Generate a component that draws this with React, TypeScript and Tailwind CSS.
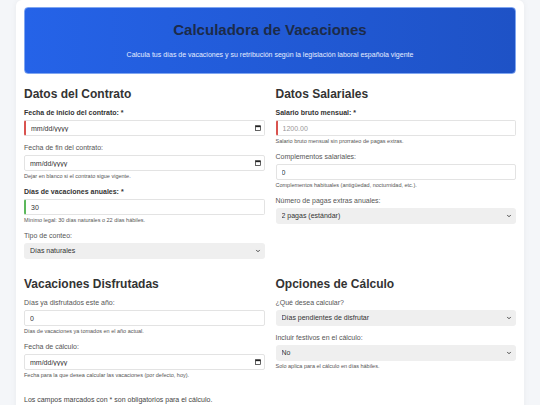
import { ChevronDown } from "lucide-react";

interface FieldProps {
  label: string;
  required?: boolean;
  help?: string;
  children: React.ReactNode;
}

function Field({ label, required, help, children }: FieldProps) {
  return (
    <div className="mb-[7px]">
      <label
        className={`block text-[7px] leading-[9px] mb-[3px] ${
          required ? "font-bold text-[#333]" : "text-[#555]"
        }`}
      >
        {label}
        {required && " *"}
      </label>
      {children}
      {help && <p className="mt-[2px] text-[5.5px] leading-[7px] text-[#555]">{help}</p>}
    </div>
  );
}

function inputClass(status?: "error" | "ok", darkPlaceholder?: boolean) {
  return `block w-full h-[16px] px-[5px] text-[7px] text-[#333] bg-white border border-[#e3e3e3] rounded-[2px] outline-none ${
    darkPlaceholder ? "placeholder:text-[#333]" : "placeholder:text-[#999]"
  } ${
    status === "error"
      ? "border-l-2 border-l-[#d9534f]"
      : status === "ok"
      ? "border-l-2 border-l-[#5cb85c]"
      : ""
  }`;
}

function TextInput({
  value,
  placeholder,
  status,
}: {
  value?: string;
  placeholder?: string;
  status?: "error" | "ok";
}) {
  return <input type="text" defaultValue={value} placeholder={placeholder} className={inputClass(status)} />;
}

function DateInput({ status }: { status?: "error" | "ok" }) {
  return (
    <div className="relative">
      <input type="text" placeholder="mm/dd/yyyy" className={inputClass(status, true)} />
      {/* calendar picker glyph */}
      <svg
        viewBox="0 0 12 12"
        className="absolute right-[4px] top-1/2 -translate-y-1/2 w-[6px] h-[6px] pointer-events-none"
      >
        <rect x="1" y="1.5" width="10" height="9.5" fill="none" stroke="#222" strokeWidth="1.4" />
        <rect x="1" y="1.5" width="10" height="2.8" fill="#222" />
      </svg>
    </div>
  );
}

function Select({ options }: { options: string[] }) {
  return (
    <div className="relative">
      <select className="block w-full h-[16px] pl-[6px] pr-4 text-[7px] text-[#333] bg-[#efefef] rounded-[3px] appearance-none outline-none">
        {options.map((o) => (
          <option key={o}>{o}</option>
        ))}
      </select>
      <ChevronDown
        className="absolute right-[4px] top-1/2 -translate-y-1/2 w-[6px] h-[6px] text-[#333] pointer-events-none"
        strokeWidth={3.5}
      />
    </div>
  );
}

function Section({ title, children }: { title: string; children: React.ReactNode }) {
  return (
    <section>
      <h2 className="text-[12px] leading-[16px] font-bold text-[#333] mb-[6px]">{title}</h2>
      {children}
    </section>
  );
}

export default function App() {
  return (
    <div className="min-h-screen bg-[#f4f6f9] font-['Liberation_Sans',Arial,sans-serif]">
      <div className="mx-4 bg-white rounded-md shadow-[0_0_6px_rgba(0,0,0,0.05)] px-2 pt-[7px] pb-4">
        {/* Header */}
        <header className="h-[67px] rounded-[4px] border border-[#80a6f0] bg-linear-to-r from-[#2563e8] to-[#1e52c6] flex flex-col items-center pt-[12px]">
          <h1 className="text-[15px] leading-[19px] font-bold text-[#1c2b4a]">Calculadora de Vacaciones</h1>
          <p className="mt-[11px] text-[7px] leading-[9px] text-[#e6eeff]">
            Calcula tus días de vacaciones y su retribución según la legislación laboral española vigente
          </p>
        </header>

        <div className="grid grid-cols-2 gap-x-[11px] gap-y-[10px] mt-[12px]">
          <Section title="Datos del Contrato">
            <Field label="Fecha de inicio del contrato:" required>
              <DateInput status="error" />
            </Field>
            <Field label="Fecha de fin del contrato:" help="Dejar en blanco si el contrato sigue vigente.">
              <DateInput />
            </Field>
            <Field
              label="Días de vacaciones anuales:"
              required
              help="Mínimo legal: 30 días naturales o 22 días hábiles."
            >
              <TextInput value="30" status="ok" />
            </Field>
            <Field label="Tipo de conteo:">
              <Select options={["Días naturales", "Días hábiles"]} />
            </Field>
          </Section>

          <Section title="Datos Salariales">
            <Field
              label="Salario bruto mensual:"
              required
              help="Salario bruto mensual sin prorrateo de pagas extras."
            >
              <TextInput placeholder="1200.00" status="error" />
            </Field>
            <Field
              label="Complementos salariales:"
              help="Complementos habituales (antigüedad, nocturnidad, etc.)."
            >
              <TextInput value="0" />
            </Field>
            <Field label="Número de pagas extras anuales:">
              <Select options={["2 pagas (estándar)", "3 pagas", "Prorrateadas"]} />
            </Field>
          </Section>

          <Section title="Vacaciones Disfrutadas">
            <Field label="Días ya disfrutados este año:" help="Días de vacaciones ya tomados en el año actual.">
              <TextInput value="0" />
            </Field>
            <Field
              label="Fecha de cálculo:"
              help="Fecha para la que desea calcular las vacaciones (por defecto, hoy)."
            >
              <DateInput />
            </Field>
          </Section>

          <Section title="Opciones de Cálculo">
            <Field label="¿Qué desea calcular?">
              <Select options={["Días pendientes de disfrutar", "Retribución de vacaciones"]} />
            </Field>
            <Field label="Incluir festivos en el cálculo:" help="Solo aplica para el cálculo en días hábiles.">
              <Select options={["No", "Sí"]} />
            </Field>
          </Section>
        </div>

        <p className="mt-[9px] text-[7px] leading-[9px] text-[#444]">
          Los campos marcados con * son obligatorios para el cálculo.
        </p>
      </div>
    </div>
  );
}
